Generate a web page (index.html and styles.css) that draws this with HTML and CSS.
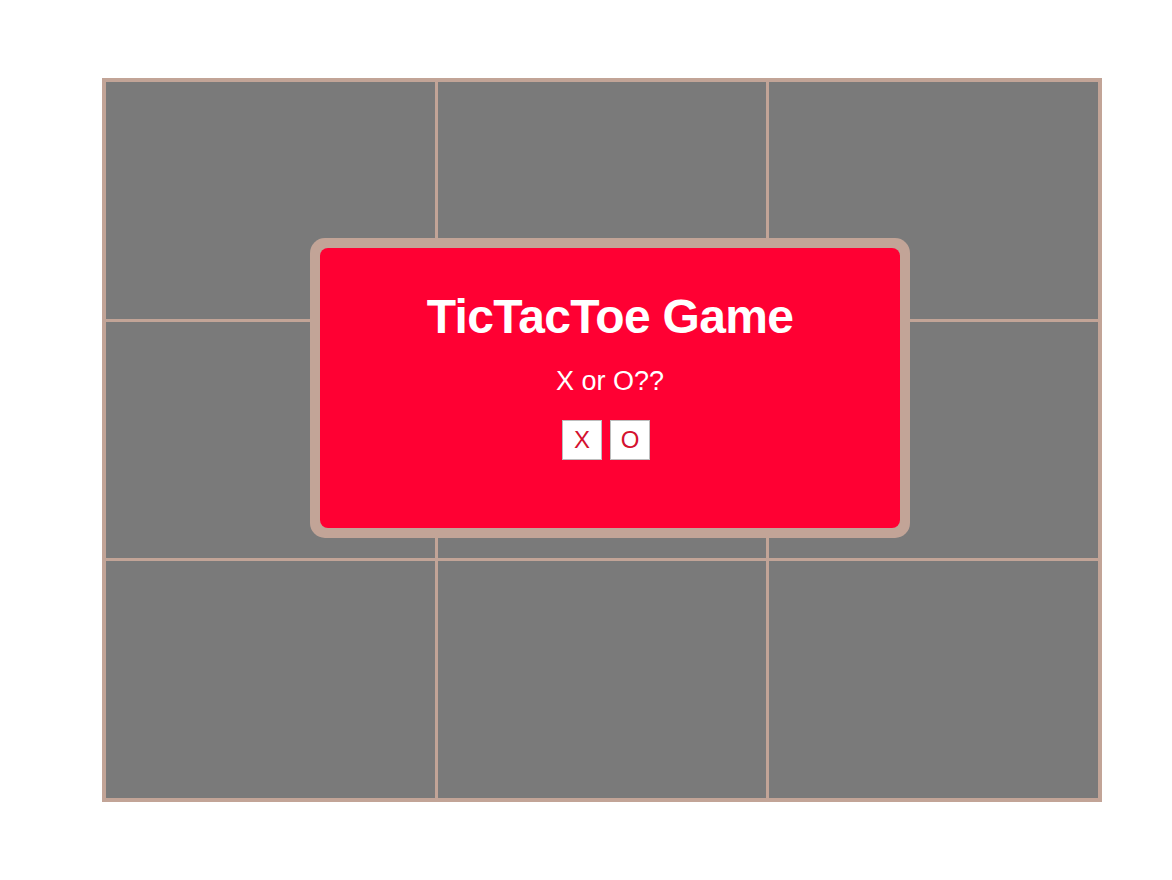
FILE: index.html
```html
<!DOCTYPE html>
<html>
<head>
<meta charset="utf-8">
<title>TicTacToe</title>
<link rel="stylesheet" href="styles.css">
</head>
<body>
<div class="page">
  <div class="board">
    <div class="cell"></div><div class="cell"></div><div class="cell"></div>
    <div class="cell"></div><div class="cell"></div><div class="cell"></div>
    <div class="cell"></div><div class="cell"></div><div class="cell"></div>
    <div class="modal">
      <div class="modal-inner">
        <h1 class="title">TicTacToe Game</h1>
        <p class="question">X or O??</p>
        <div class="choices">
          <button class="choice">X</button>
          <button class="choice">O</button>
        </div>
      </div>
    </div>
  </div>
</div>
</body>
</html>
```
FILE: styles.css
```css
html, body {
  margin: 0;
  padding: 0;
  background: #ffffff;
  font-family: "Liberation Sans", Arial, Helvetica, sans-serif;
}

.page {
  padding: 78px 0 0 102px;
}

.board {
  position: relative;
  width: 1000px;
  height: 724px;
  box-sizing: border-box;
  border: 4px solid #c2a497;
  background: #c2a497;
  display: grid;
  grid-template-columns: repeat(3, 1fr);
  grid-template-rows: repeat(3, 1fr);
  gap: 3px;
}

.cell {
  background: #7a7a7a;
}

.modal {
  position: absolute;
  left: 204px;
  top: 156px;
  width: 600px;
  height: 300px;
  box-sizing: border-box;
  padding: 10px;
  background: #c2a497;
  border-radius: 15px;
}

.modal-inner {
  height: 100%;
  box-sizing: border-box;
  background: #ff0033;
  border-radius: 8px;
  padding-top: 41px;
  display: flex;
  flex-direction: column;
  align-items: center;
  color: #ffffff;
}

.title {
  margin: 0;
  font-size: 48px;
  line-height: 55px;
  font-weight: bold;
  letter-spacing: -0.7px;
}

.question {
  margin: 22px 0 0;
  font-size: 27px;
  line-height: 31px;
}

.choices {
  margin-top: 23px;
  display: flex;
}

.choice {
  width: 40px;
  height: 40px;
  margin-right: 8px;
  box-sizing: border-box;
  padding: 0;
  border: 1px solid #bdbdbd;
  background: #ffffff;
  color: #d4112f;
  font-family: "Liberation Sans", Arial, Helvetica, sans-serif;
  font-size: 24px;
  line-height: 38px;
  text-align: center;
}
```
